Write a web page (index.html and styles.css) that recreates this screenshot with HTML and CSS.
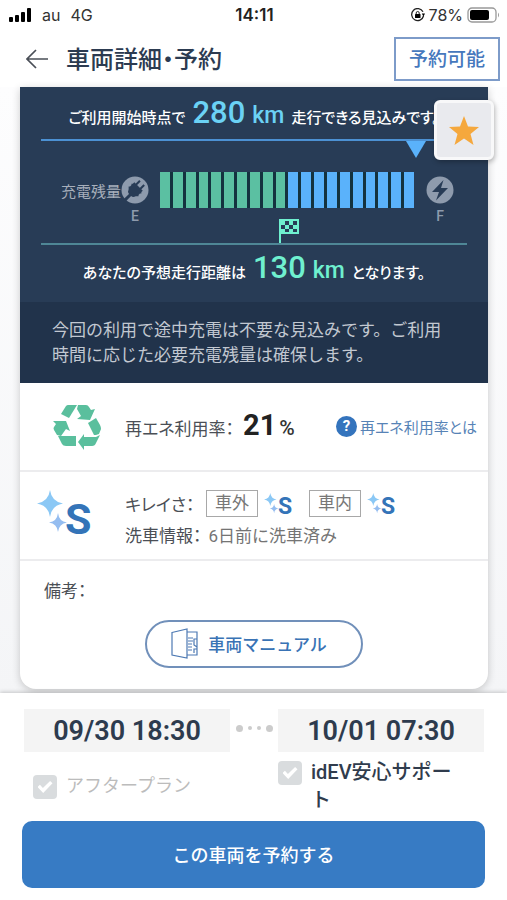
FILE: index.html
```html
<!DOCTYPE html>
<html lang="ja">
<head>
<meta charset="utf-8">
<meta name="viewport" content="width=device-width, initial-scale=1">
<title>車両詳細・予約</title>
<link rel="stylesheet" href="styles.css">
</head>
<body>
<svg class="defs" aria-hidden="true">
  <symbol id="sparkle" viewBox="0 0 54 50">
    <path class="spark" d="M13 0Q14.500 11.500 26 13.500Q14.500 15.500 13 27Q11.500 15.500 0 13.500Q11.500 11.500 13 0Z"/>
    <path class="spark spark-small" d="M21 23Q22 31.500 30 32.500Q22 33.500 21 42Q20 33.500 12 32.500Q20 31.500 21 23Z"/>
  </symbol>
</svg>

<div class="statusbar">
  <div class="carrier">
    <svg width="23" height="14" viewBox="0 0 23 14"><rect x="0" y="9" width="4" height="5" rx="1"/><rect x="6" y="7" width="4" height="7" rx="1"/><rect x="12" y="4" width="4" height="10" rx="1"/><rect x="18" y="0" width="4" height="14" rx="1"/></svg>
    <span>au</span><span>4G</span>
  </div>
  <strong class="clock">14:11</strong>
  <div class="power">
    <svg width="14" height="14" viewBox="0 0 14 14"><path d="M12.500 8A6 6 0 1 1 12 3.800" fill="none" stroke="#222" stroke-width="1.300"/><path d="M10.800 5.500h3.200l-1.500 3z"/><rect x="4" y="6" width="5.500" height="4" rx=".6"/><path d="M5.200 6V5a1.500 1.500 0 0 1 3 0v1" fill="none" stroke="#222"/></svg>
    <span>78%</span>
    <svg width="33" height="16" viewBox="0 0 33 16"><rect x="1" y="1" width="28" height="14" rx="4" fill="none" stroke="#999" stroke-width="1.300"/><rect x="3" y="3" width="19" height="10" rx="2"/><path d="M31 5.500q2 2.500 0 5z" fill="#999"/></svg>
  </div>
</div>

<header class="header">
  <a class="back" href="#" aria-label="戻る"><svg width="22" height="20" viewBox="0 0 22 20"><path d="M10 1L1 10l9 9M1 10h21" fill="none" stroke="#4a4f57" stroke-width="1.700"/></svg></a>
  <h1>車両詳細・予約</h1>
  <span class="availability">予約可能</span>
</header>

<main class="content">
  <article class="card">
    <button class="favorite" type="button" aria-label="お気に入り"><svg width="32" height="31" viewBox="0 0 32 31"><path d="M16 1l4 10.500 11 .5-8.500 7 3 11L16 23.500 6.500 30l3-11L1 12l11-.5z" fill="#f5a83d"/></svg></button>

    <section class="range">
      <p class="distance available"><span>ご利用開始時点で</span><b>280</b><em>km</em><span>走行できる見込みです。</span></p>
      <div class="marker"><svg width="20" height="17" viewBox="0 0 20 17"><path d="M0 0h20L10 17z" fill="#5ab2fb"/></svg></div>
      <div class="gauge">
        <span class="gauge-label">充電残量</span>
        <svg class="end-icon" viewBox="0 0 28 28"><circle cx="14" cy="14" r="13.500" fill="#8e9bad"/><g transform="rotate(45 14 14)" fill="#283c56"><path d="M8 9h12v2l1 1-1 1v2l1 1-2 2q-1 3-3.500 3v7h-3v-7Q10 21 9 18l-2-2 1-1v-2l-1-1 1-1z"/><path d="M10 4h2v6h-2zM16 4h2v6h-2z"/></g></svg>
        <div class="bars" role="img" aria-label="充電残量">
          <i></i><i></i><i></i><i></i><i></i><i></i><i></i><i></i><i></i><i></i><i class="extra"></i><i class="extra"></i><i class="extra"></i><i class="extra"></i><i class="extra"></i><i class="extra"></i><i class="extra"></i><i class="extra"></i><i class="extra"></i><i class="extra"></i>
        </div>
        <svg class="end-icon" viewBox="0 0 28 28"><circle cx="14" cy="14" r="13.500" fill="#8e9bad"/><path d="M17.500 4L6 16h7l-3 8.500L22 12h-7z" fill="#283c56"/></svg>
        <span class="end-name empty">E</span>
        <svg class="flag" width="20" height="24" viewBox="0 0 20 24"><path d="M0 0h20v15H2v9H0z" fill="#6ff0cf"/><path d="M6 2h4v4H6zM14 2h4v4h-4zM2 6h4v4H2zM10 6h4v4h-4zM6 10h4v3H6zM14 10h4v3h-4z" fill="#283c56"/></svg>
        <span class="end-name">F</span>
      </div>
      <p class="distance planned"><span>あなたの予想走行距離は</span><b>130</b><em>km</em><span>となります。</span></p>
    </section>
    <p class="notice">今回の利用で途中充電は不要な見込みです。ご利用時間に応じた必要充電残量は確保します。</p>

    <section class="row">
      <div class="row-icon recycle">
        <svg width="48" height="46" viewBox="0 0 48 46" fill="#5abf9d"><path d="M15 1h9l-8 13-8-4 5-8q1-1 2-1z"/><path d="M25 1h8q2 0 3 2l2 3 4-1-5 11-13-1 4-3-4-7z"/><path d="M35 19l8-5 4 7q1 2 1 4l-2 5-3 1-2 0z"/><path d="M47 31l-4 8q-1 3-4 3h-8v4l-6-8 6-8v3h12z"/><path d="M5 32h18v10H13q-3 0-4-2z"/><path d="M4 31l-3-5q-1-2 0-3l2-3-3-3h13l4 10-4-2-5 7z"/></svg>
      </div>
      <div class="energy"><span>再エネ利用率：</span><b>21</b><em>%</em></div>
      <a class="help" href="#"><i>?</i>再エネ利用率とは</a>
    </section>

    <section class="row">
      <div class="row-icon grade"><svg width="54" height="50"><use href="#sparkle"/></svg><b>S</b></div>
      <div class="clean">
        <div class="clean-line"><span>キレイさ：</span><span class="tag">車外</span><span class="grade small"><svg width="26" height="24"><use href="#sparkle"/></svg><b>S</b></span><span class="tag">車内</span><span class="grade small"><svg width="26" height="24"><use href="#sparkle"/></svg><b>S</b></span></div>
        <div class="wash"><span class="term">洗車情報：</span><span>6日前に洗車済み</span></div>
      </div>
    </section>

    <section class="remarks">
      <p>備考：</p>
      <a class="manual" href="#"><svg width="27" height="31" viewBox="0 0 27 31" fill="none" stroke="#4d79b3" stroke-width="1.200"><path d="M1 4.500L16 1v29L1 27z"/><path d="M16 4h10v23H16M17 10h5M17 13h5M17 16h4M17 19h4M17 22h4M26 11h-3v6l3 2M23 25v-4h3"/></svg>車両マニュアル</a>
    </section>
  </article>
</main>

<footer class="booking">
  <div class="dates">
    <button type="button">09/30 18:30</button>
    <span class="dots"><i></i><i></i><i></i><i></i></span>
    <button type="button">10/01 07:30</button>
  </div>
  <div class="options">
    <label class="option disabled"><input type="checkbox" checked disabled><span>アフタープラン</span></label>
    <label class="option"><input type="checkbox" checked><span>idEV安心サポート</span></label>
  </div>
  <button class="reserve" type="button">この車両を予約する</button>
</footer>
</body>
</html>
```
FILE: styles.css
```css
* { box-sizing: border-box; }
body {
  margin: 0;
  min-height: 100vh;
  display: flex;
  flex-direction: column;
  background: #fff;
  color: #4b4f56;
  font-family: Roboto, "Noto Sans CJK JP", sans-serif;
  font-size: 17px;
}
h1, p { margin: 0; }
a { text-decoration: none; }
i, em { font-style: normal; }
button { border: 0; font-family: inherit; }
svg { display: block; flex: none; }
.defs { position: absolute; width: 0; height: 0; }
.spark { fill: #8bc8f5; }
.spark-small { fill: #95bdf0; }

.statusbar {
  display: grid;
  grid-template-columns: 1fr auto 1fr;
  align-items: center;
  height: 29px;
  padding: 0 7px 0 9px;
  font-family: Inter, sans-serif;
  font-size: 16px;
  color: #333;
}
.carrier, .power { display: flex; align-items: center; }
.carrier { gap: 10px; }
.power { justify-content: flex-end; gap: 4px; }
.clock { color: #222; font-size: 17px; font-weight: 600; }

.header {
  display: flex;
  align-items: center;
  height: 58px;
  padding: 2px 7px 0 26px;
}
.header h1 {
  flex: 1;
  margin-left: 18px;
  padding-bottom: 4px;
  color: #2c3b51;
  font-size: 24px;
  font-weight: 500;
  font-feature-settings: "palt";
}
.availability {
  padding: 1px 13px 0;
  border: 2px solid #7d9bc9;
  color: #4678bd;
  font-size: 19px;
  font-weight: 500;
  line-height: 39px;
}

.content {
  flex: 1;
  padding: 0 19px 4px 20px;
  background: linear-gradient(#fdfdfe, #f4f5f7);
}
.card {
  position: relative;
  background: #fff;
  border-radius: 0 0 16px 16px;
  box-shadow: 0 2px 8px #0003;
}
.favorite {
  position: absolute;
  top: 13px;
  right: -6px;
  display: grid;
  place-items: center;
  width: 60px;
  height: 60px;
  padding: 0;
  border: 3px solid #f8f8f9;
  border-radius: 6px;
  background: #e9eaee;
  box-shadow: 1px 2px 5px #0004;
}

.range { padding: 0 21px; background: #283c56; }
.distance {
  display: flex;
  justify-content: center;
  align-items: baseline;
  gap: 7px;
  height: 54px;
  padding-top: 8px;
  color: #fff;
  font-size: 15px;
  font-weight: 500;
  line-height: 36px;
  white-space: nowrap;
  font-feature-settings: "palt";
}
.distance b { font-size: 31px; font-weight: 500; }
.distance em { font-size: 23px; font-weight: 500; }
.available { border-bottom: 2px solid #4c91d3; }
.available b, .available em { color: #6bd2f5; }
.planned { height: 59px; padding-top: 5px; border-top: 2px solid #4f8796; }
.planned b, .planned em { color: #6ff0cf; }
.marker { display: flex; justify-content: flex-end; height: 31px; padding-right: 41px; }
.gauge {
  display: grid;
  grid-template-columns: auto 28px 1fr 28px;
  grid-template-rows: 36px 35px;
  align-items: center;
  margin: 0 13px 0 20px;
}
.gauge-label { color: #a7afbb; font-size: 15px; }
.end-icon { width: 28px; height: 28px; }
.bars {
  display: flex;
  gap: 3px;
  height: 36px;
  margin: 0 12px 0 11px;
  background: #14333f;
}
.bars i { flex: 1; background: #5bc0a2; }
.bars .extra { background: #5ab2fb; }
.end-name {
  align-self: start;
  color: #8e9bad;
  font-size: 14px;
  font-weight: 500;
  line-height: 16px;
  text-align: center;
}
.empty { grid-column: 2; }
.flag { align-self: end; margin-left: 47%; }
.notice {
  padding: 16px 40px 15px 32px;
  background: #21334b;
  color: #c2c8d1;
  font-size: 17px;
  line-height: 25px;
}

.row {
  display: flex;
  align-items: center;
  height: 89px;
  padding-right: 11px;
  border-bottom: 2px solid #ececee;
}
.row-icon { flex: none; width: 105px; }
.recycle { padding-left: 33px; }
.energy { display: flex; flex: 1; align-items: baseline; gap: 7px; padding-bottom: 4px; }
.energy > span, .clean-line > span:first-child, .term, .remarks p { font-feature-settings: "palt"; }
.energy > span { width: 111px; }
.energy b { color: #222; font-size: 29px; line-height: 30px; }
.energy em { margin-left: -4px; color: #333; font-size: 21px; font-weight: 500; }
.help {
  display: flex;
  align-items: center;
  gap: 3px;
  color: #5783b6;
  font-size: 15px;
  font-feature-settings: "palt";
}
.help i {
  width: 21px;
  height: 21px;
  border-radius: 50%;
  background: #3474bd;
  color: #fff;
  font-weight: 700;
  line-height: 21px;
  text-align: center;
}
.grade { display: flex; align-items: flex-end; }
.row-icon.grade { padding: 0 0 2px 17px; }
.grade b {
  margin-left: -26px;
  color: #3474b8;
  font-size: 43px;
  line-height: 41px;
}
.small b { margin-left: -12px; font-size: 23px; line-height: 20px; }
.clean { display: grid; gap: 7px; padding-top: 7px; }
.clean-line { display: flex; align-items: center; }
.clean-line > span:first-child { width: 81px; }
.tag {
  padding: 0 8px;
  border: 1px solid #a8a8a8;
  color: #777;
  line-height: 25px;
}
.small { width: 51px; padding: 4px 0 0 6px; }
.wash { display: flex; gap: 7px; line-height: 25px; color: #747474; }
.term { color: #4b4f56; }
.remarks { padding: 18px 24px 21px; }
.remarks p { line-height: 25px; }
.manual {
  display: flex;
  align-items: center;
  justify-content: center;
  gap: 10px;
  width: 218px;
  height: 48px;
  margin: 16px auto 0;
  padding: 0 10px 2px 0;
  border: 2px solid #7190ba;
  border-radius: 24px;
  color: #3973b5;
  font-weight: 500;
}

.booking {
  position: relative;
  padding: 16px 22px 12px;
  background: #fff;
  box-shadow: 0 -1px 4px #0003;
}
.dates, .options { display: grid; grid-template-columns: 1fr 48px 1fr; padding: 0 1px 0 2px; }
.dates button {
  height: 43px;
  padding: 0;
  background: #f4f4f4;
  color: #2d3b4e;
  font-size: 27px;
  font-weight: 600;
}
.dots { display: flex; align-items: center; justify-content: center; gap: 5px; padding-bottom: 5px; }
.dots i { width: 4px; height: 4px; border-radius: 50%; background: #ccc; }
.dots i:first-child, .dots i:last-child { width: 7px; height: 7px; }
.options { height: 69px; }
.option {
  display: flex;
  align-items: flex-start;
  gap: 9px;
  padding: 6px 24px 0 0;
  color: #303c4d;
  font-size: 20px;
  font-weight: 500;
  line-height: 28px;
}
.option:last-child { grid-column: 3; }
.option input {
  flex: none;
  display: grid;
  place-items: center;
  appearance: none;
  width: 24px;
  height: 24px;
  margin: 3px 0 0;
  border-radius: 4px;
  background: #d9dcde;
}
.option input::after {
  content: "";
  width: 15px;
  height: 12px;
  background: #fff;
  clip-path: polygon(0 50%, 16% 32%, 36% 58%, 84% 0, 100% 18%, 38% 100%);
}
.disabled { padding: 20px 0 0 9px; color: #bcbcbc; }
.disabled span { font-weight: 400; font-size: 18px; }
.reserve {
  display: block;
  width: 100%;
  height: 67px;
  padding: 0 0 2px;
  border-radius: 10px;
  background: #377bc4;
  color: #fff;
  font-size: 18px;
  font-weight: 500;
}
```
